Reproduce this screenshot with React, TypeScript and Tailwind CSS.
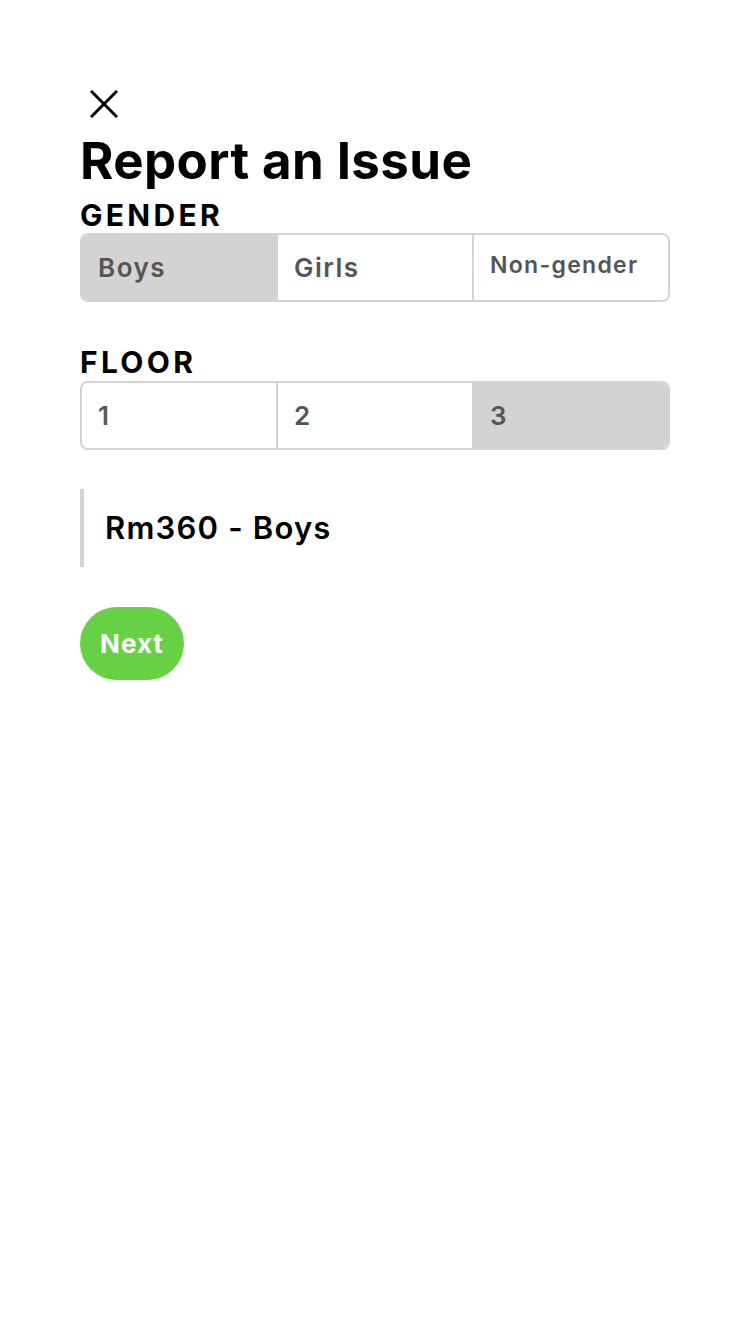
import React, { useState } from 'react';

const font = { fontFamily: 'Inter, "Noto Sans", sans-serif' };

function Segmented({ options, value, onChange, small }: { options: string[]; value: string; onChange: (v: string) => void; small?: string[] }) {
  return (
    <div className="flex w-[590px] h-[69px] border-2 border-[#d3d3d3] rounded-[8px] overflow-hidden">
      {options.map((o, i) => (
        <button
          key={o}
          onClick={() => onChange(o)}
          className={
            'flex-1 flex items-center pl-[16px] text-[#555] font-semibold text-left ' +
            (i > 0 ? 'border-l-2 border-[#d3d3d3] ' : '') +
            (value === o ? 'bg-[#d3d3d3] ' : 'bg-white ') +
            (small?.includes(o) ? 'text-[23px] tracking-[1.3px] pb-[4px]' : 'text-[26px] tracking-[1.5px]')
          }
        >
          {o}
        </button>
      ))}
    </div>
  );
}

export default function App() {
  const [gender, setGender] = useState('Boys');
  const [floor, setFloor] = useState('3');

  return (
    <div className="min-h-[1334px] bg-white pl-[80px] pt-[90px]" style={font}>
      <button className="block ml-[10px]">
        <svg className="block" width="28" height="28" viewBox="0 0 28 28" fill="none" stroke="black" strokeWidth="3">
          <path d="M1 1L27 27M27 1L1 27" />
        </svg>
      </button>
      <h1 className="text-[51px] font-bold text-black leading-[56px] mt-[15px] tracking-[0.4px]">Report an Issue</h1>
      <div className="text-[30px] font-bold text-black leading-[32px] mt-[10px] tracking-[3.3px]">GENDER</div>
      <div className="mt-[2px]">
        <Segmented options={['Boys', 'Girls', 'Non-gender']} value={gender} onChange={setGender} small={['Non-gender']} />
      </div>
      <div className="text-[30px] font-bold text-black leading-[32px] mt-[44px] tracking-[3.3px]">FLOOR</div>
      <div className="mt-[3px]">
        <Segmented options={['1', '2', '3']} value={floor} onChange={setFloor} />
      </div>
      <div className="mt-[39px] h-[78px] border-l-4 border-[#d3d3d3] flex items-center pl-[21px] text-[31px] font-semibold text-black tracking-[1.2px]">
        Rm360 - Boys
      </div>
      <button className="block mt-[40px] w-[104px] h-[73px] rounded-full bg-[#66d144] text-white text-[26px] font-bold tracking-[1px]">
        Next
      </button>
    </div>
  );
}
